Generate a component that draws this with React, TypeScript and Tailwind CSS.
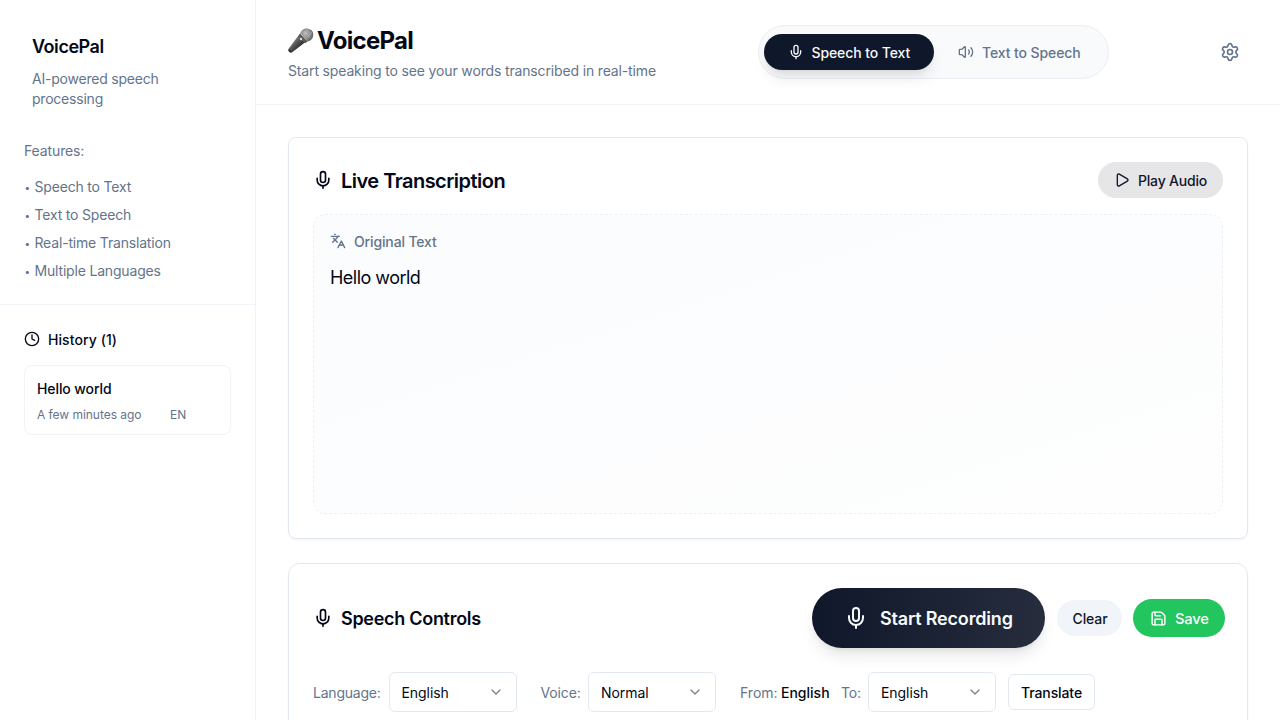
import React from "react";
import { Mic, Volume2, Settings, Clock, Play, Languages, Save, ChevronDown } from "lucide-react";

const features = ["Speech to Text", "Text to Speech", "Real-time Translation", "Multiple Languages"];

function MicrophoneMark() {
  return (
    <svg className="h-[25px] w-[26px] shrink-0" viewBox="0 0 26 25">
      <defs>
        <linearGradient id="handle" x1="0" y1="0" x2="1" y2="1">
          <stop offset="0.3" stopColor="#777" />
          <stop offset="0.55" stopColor="#444" />
          <stop offset="0.8" stopColor="#1c1c1c" />
        </linearGradient>
        <radialGradient id="grille" cx="0.45" cy="0.35" r="0.65">
          <stop offset="0" stopColor="#b8b8b8" />
          <stop offset="0.6" stopColor="#858585" />
          <stop offset="1" stopColor="#4c4c4c" />
        </radialGradient>
      </defs>
      <path d="M10.5 7.5 17.5 14 4.2 24.2Q2.5 25 1 23.4Q-.1 22 .8 20.5Z" fill="url(#handle)" />
      <path d="M.7 21 3.8 24.4Q2.2 25 1 23.6Q0 22.5.7 21Z" fill="#222" />
      <path d="M12.2 5.2Q14 0 19.2.5Q25 1.3 25.3 6.2Q25.4 11.8 19.6 13.6L16.6 15 10.5 8.5Z" fill="url(#grille)" />
      <path d="M12 5.8 19.4 13.6 17 15.2 10.2 8.1Z" fill="#595959" />
      <path d="M12.8 5.8 19.2 12.7" stroke="#bbb" strokeWidth="0.8" />
      <path d="m16 3 6.5 6.5M18.5 2l5 5M15.5 7l5-5M18 10l6-6" stroke="#ddd" strokeWidth="0.5" opacity="0.6" />
      <circle cx="13" cy="11" r="1.2" fill="#ddd" />
    </svg>
  );
}

function SelectBox({ value }: { value: string }) {
  return (
    <button className="flex h-10 w-32 shrink-0 items-center justify-between rounded-md border border-[#e2e8f0] bg-white px-3 text-sm">
      <span className="pt-0.5 tracking-[-0.06px]">{value}</span>
      <ChevronDown className="size-4 opacity-50" />
    </button>
  );
}

function Sidebar() {
  return (
    <aside className="flex w-64 shrink-0 flex-col border-r border-[#f1f3f8]">
      <div className="border-b border-[#f1f3f8] px-6 pt-[33px] pb-[23px]">
        <div className="px-2">
          <h2 className="text-lg leading-7 font-semibold tracking-[-0.025em]">VoicePal</h2>
          <p className="mt-2 text-sm leading-5 tracking-[-0.22px] text-[#64748b]">AI-powered speech processing</p>
        </div>
        <div className="mt-8 text-sm leading-5 text-[#64748b]">
          <p className="tracking-[-0.12px]">Features:</p>
          <ul className="mt-4 space-y-2">
            {features.map((f) => (
              <li key={f} className="flex h-5 tracking-[-0.18px]">
                <span className="w-[10.5px] pl-[0.5px] text-[10px]">•</span>
                {f}
              </li>
            ))}
          </ul>
        </div>
      </div>
      <div className="px-6 pt-[23px]">
        <div className="flex items-center gap-2 text-sm leading-5 font-medium">
          <Clock className="size-4" />
          <h3 className="pt-0.5 tracking-[0.08px]">History (1)</h3>
        </div>
        <div className="mt-[15px] h-[70px] w-[207px] rounded-lg border border-[#f1f3f8] px-3 pt-[13px]">
          <p className="text-sm leading-5 font-medium tracking-[-0.1px]">Hello world</p>
          <div className="mt-2 flex text-xs leading-4 tracking-[-0.04px] text-[#64748b]">
            <span className="w-[133px]">A few minutes ago</span>
            <span>EN</span>
          </div>
        </div>
      </div>
    </aside>
  );
}

function Header() {
  return (
    <header className="flex h-[105px] shrink-0 items-start border-b border-[#f1f3f8] pr-8 pl-8">
      <div className="w-[470px] shrink-0 pt-6">
        <h1 className="flex h-8 items-center gap-[3px] text-2xl leading-8 font-bold tracking-[-0.03em]">
          <MicrophoneMark />
          <span className="pt-px">VoicePal</span>
        </h1>
        <p className="mt-[5px] text-sm leading-5 tracking-[-0.15px] text-[#64748b]">
          Start speaking to see your words transcribed in real-time
        </p>
      </div>
      <div className="mt-[25px] flex h-[54px] w-[351px] shrink-0 items-center rounded-full border border-[#ebeff5] bg-[#f8fafc] pl-[5px] text-sm font-medium tracking-[-0.1px]">
        <button className="flex h-9 w-[170px] items-center rounded-full bg-[#0f172a] pl-6 text-[#f8fafc] shadow-lg">
          <Mic className="mr-[7.5px] size-4" />
          <span className="pt-0.5">Speech to Text</span>
        </button>
        <button className="flex h-9 w-[170px] items-center rounded-full pl-6 text-[#64748b]">
          <Volume2 className="mr-2 size-4" />
          <span className="pt-0.5">Text to Speech</span>
        </button>
      </div>
      <button className="mt-[42px] mr-2 ml-auto text-[#64748b]">
        <Settings className="size-5" />
      </button>
    </header>
  );
}

export default function App() {
  return (
    <div className="flex h-[720px] w-[1280px] overflow-hidden bg-white font-['Inter',sans-serif] text-[#020817]">
      <Sidebar />
      <div className="flex min-w-0 flex-1 flex-col">
        <Header />
        <main className="px-8 pt-8">
          <section className="h-[402px] rounded-lg border border-[#e2e8f0] p-6 shadow-[0_1px_2px_0_rgba(0,0,0,0.05)]">
            <div className="flex h-9 items-center justify-between">
              <h2 className="flex items-center gap-2 text-xl font-semibold tracking-[-0.52px]">
                <Mic className="size-5" />
                <span className="pt-0.5">Live Transcription</span>
              </h2>
              <button className="flex h-9 w-[125px] items-center rounded-full bg-[#e6e6e9] pl-4 text-sm font-medium tracking-[-0.2px] text-[#0f172a]">
                <Play className="mr-2 size-4" />
                <span className="pt-0.5">Play Audio</span>
              </button>
            </div>
            <div className="mt-[15.5px] h-[300.5px] rounded-xl border border-dashed border-[#eff1f5] bg-linear-to-br from-[#fbfcfe] via-[#fcfdfe] to-[#fefefe] px-4 pt-[15.5px]">
              <div className="flex items-center gap-2 text-sm leading-5 font-medium tracking-[-0.14px] text-[#64748b]">
                <Languages className="size-4" />
                <span className="pt-0.5">Original Text</span>
              </div>
              <p className="mt-[11px] text-lg leading-[29px] tracking-[-0.52px]">Hello world</p>
            </div>
          </section>
          <section className="mt-6 h-[300px] rounded-xl border border-[#e2e8f0] p-6 shadow-[0_1px_2px_0_rgba(0,0,0,0.05)]">
            <div className="flex h-[60px] items-center">
              <h2 className="flex items-center gap-2 text-lg font-semibold tracking-[-0.29px]">
                <Mic className="size-5" />
                <span className="pt-0.5">Speech Controls</span>
              </h2>
              <button className="ml-auto flex h-[60px] w-[233px] items-center rounded-full bg-linear-to-r from-[#0f172a] to-[#272d3d] pl-8 text-lg font-semibold tracking-[-0.18px] text-[#f8fafc] shadow-lg">
                <Mic className="mr-3 size-6" />
                <span className="pt-0.5">Start Recording</span>
              </button>
              <button className="ml-3 h-9 w-[65px] rounded-full bg-[#f1f5f9] pt-0.5 text-sm font-medium tracking-[-0.1px] text-[#0f172a]">
                <span className="pl-px">Clear</span>
              </button>
              <button className="mr-[-2px] ml-[11px] flex h-[38px] w-[92px] items-center rounded-full bg-[#22c55e] pl-[17px] text-[14.7px] font-medium tracking-[-0.15px] text-white">
                <Save className="mr-2 size-[17px]" />
                <span className="pt-0.5">Save</span>
              </button>
            </div>
            <div className="mt-6 flex items-center text-sm">
              <span className="w-[75.5px] pt-0.5 tracking-[-0.22px] text-[#64748b]">Language:</span>
              <SelectBox value="English" />
              <span className="ml-6 w-[47.5px] pt-0.5 tracking-[-0.15px] text-[#64748b]">Voice:</span>
              <SelectBox value="Normal" />
              <span className="ml-6 w-[41px] pt-0.5 text-[#64748b]">From:</span>
              <span className="w-[60px] pt-0.5 font-medium">English</span>
              <span className="w-[27px] pt-0.5 tracking-[-0.15px] text-[#64748b]">To:</span>
              <SelectBox value="English" />
              <button className="ml-3 h-9 w-[87px] rounded-md border border-[#e2e8f0] pt-0.5 text-sm font-medium tracking-[-0.1px]">
                Translate
              </button>
            </div>
          </section>
        </main>
      </div>
    </div>
  );
}
